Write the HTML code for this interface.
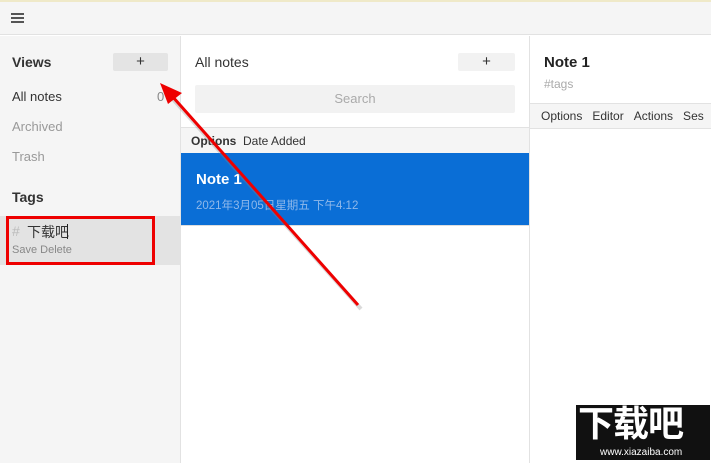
<!DOCTYPE html>
<html><head><meta charset="utf-8"><style>
*{margin:0;padding:0;box-sizing:border-box}
body{width:711px;height:463px;overflow:hidden;background:#fff;font-family:"Liberation Sans","Noto Sans CJK SC",sans-serif;position:relative;color:#222}
.a{position:absolute}
</style></head><body>
<div class="a" style="left:0;top:0;width:711px;height:2px;background:#efe9c8"></div>
<div class="a" style="left:0;top:2px;width:711px;height:33px;background:#f5f5f5;border-bottom:1px solid #e2e2e2"></div>
<div class="a" style="left:11px;top:13px;width:13px;height:2px;background:#555"></div>
<div class="a" style="left:11px;top:17px;width:13px;height:2px;background:#555"></div>
<div class="a" style="left:11px;top:21px;width:13px;height:2px;background:#555"></div>
<!-- sidebar -->
<div class="a" style="left:0;top:36px;width:181px;height:427px;background:#f5f5f5;border-right:1px solid #e2e2e2"></div>
<div class="a" style="left:12px;top:54px;font-size:14px;font-weight:bold;color:#333">Views</div>
<div class="a" style="left:113px;top:53px;width:55px;height:18px;background:#e4e4e4;border-radius:2px;text-align:center;font-size:15px;line-height:17px;color:#333">+</div>
<div class="a" style="left:12px;top:89px;font-size:13px;color:#333">All notes</div>
<div class="a" style="left:157px;top:89px;font-size:13px;color:#888">0</div>
<div class="a" style="left:12px;top:119px;font-size:13px;color:#999">Archived</div>
<div class="a" style="left:12px;top:149px;font-size:13px;color:#999">Trash</div>
<div class="a" style="left:12px;top:189px;font-size:14px;font-weight:bold;color:#333">Tags</div>
<div class="a" style="left:0;top:216px;width:180px;height:49px;background:#e3e3e3"></div>
<div class="a" style="left:6px;top:216px;width:149px;height:49px;border:3px solid #e00"></div>
<div class="a" style="left:12px;top:223px;font-size:14px;color:#bbb">#</div>
<div class="a" style="left:27px;top:222px;font-size:14px;color:#333">下载吧</div>
<div class="a" style="left:67px;top:224px;width:1px;height:15px;background:#222"></div>
<div class="a" style="left:12px;top:244px;font-size:11px;color:#888">Save Delete</div>
<!-- middle -->
<div class="a" style="left:195px;top:54px;font-size:14px;color:#333">All notes</div>
<div class="a" style="left:458px;top:53px;width:57px;height:18px;background:#f2f2f2;border-radius:2px;text-align:center;font-size:15px;line-height:17px;color:#333">+</div>
<div class="a" style="left:195px;top:85px;width:320px;height:28px;background:#f2f2f2;border-radius:2px;text-align:center;font-size:13px;line-height:28px;color:#aaa">Search</div>
<div class="a" style="left:181px;top:127px;width:348px;height:26px;background:#f5f5f5;border-top:1px solid #e2e2e2"></div>
<div class="a" style="left:191px;top:134px;font-size:12px;color:#333"><b>Options</b>&nbsp; Date Added</div>
<div class="a" style="left:181px;top:153px;width:348px;height:73px;background:#0a6ed6;border-bottom:1px solid #ddd"></div>
<div class="a" style="left:196px;top:171px;font-size:15px;font-weight:bold;color:#fff">Note 1</div>
<div class="a" style="left:196px;top:197px;font-size:11.5px;color:#8fb8ea">2021年3月05日星期五 下午4:12</div>
<!-- right -->
<div class="a" style="left:529px;top:36px;width:1px;height:427px;background:#e2e2e2"></div>
<div class="a" style="left:544px;top:54px;font-size:15px;font-weight:bold;color:#222">Note 1</div>
<div class="a" style="left:544px;top:77px;font-size:12px;color:#aaa">#tags</div>
<div class="a" style="left:530px;top:103px;width:181px;height:26px;background:#f5f5f5;border-top:1px solid #e2e2e2;border-bottom:1px solid #e2e2e2"></div>
<div class="a" style="left:541px;top:109px;font-size:12px;color:#333;white-space:nowrap;word-spacing:0">Options&nbsp;&nbsp;&nbsp;Editor&nbsp;&nbsp;&nbsp;Actions&nbsp;&nbsp;&nbsp;Ses</div>
<!-- arrow -->
<svg class="a" style="left:0;top:0" width="711" height="463">
<line x1="359" y1="307" x2="170" y2="96" stroke="#888" stroke-width="4" opacity=".3" transform="translate(2,2)"/>
<line x1="358" y1="305" x2="172" y2="96" stroke="#e00" stroke-width="3"/>
<polygon points="160,83 182,93 168,104" fill="#e00"/>
</svg>
<!-- watermark -->
<div class="a" style="left:576px;top:405px;width:134px;height:55px;background:#111"></div>
<div class="a" style="left:578px;top:402px;font-size:36px;font-weight:bold;color:#fff;letter-spacing:-1px;line-height:44px">下载吧</div>
<div class="a" style="left:600px;top:447px;font-size:10px;color:#fff">www.xiazaiba.com</div>
</body></html>
